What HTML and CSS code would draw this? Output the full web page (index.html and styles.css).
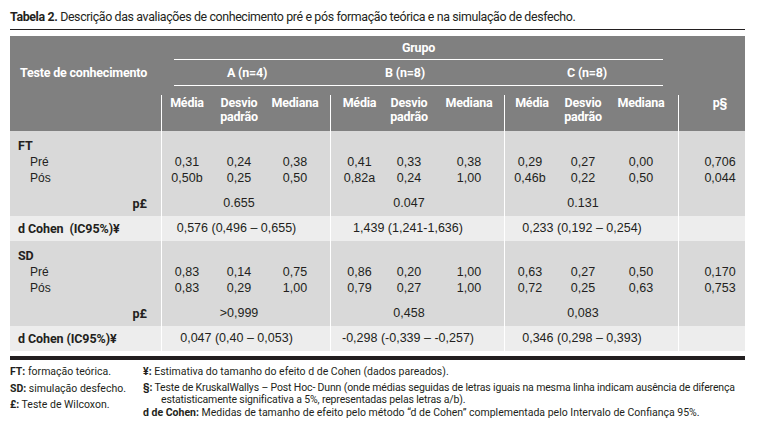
FILE: index.html
```html
<!DOCTYPE html>
<html lang="pt">
<head>
<meta charset="utf-8">
<link rel="stylesheet" href="styles.css">
</head>
<body>
<div class="page">
  <p class="caption"><b>Tabela 2.</b> Descrição das avaliações de conhecimento pré e pós formação teórica e na simulação de desfecho.</p>
  <table class="tbl">
    <colgroup>
      <col class="w-label">
      <col class="w-a1"><col class="w-a2"><col class="w-a3">
      <col class="w-b1"><col class="w-b2"><col class="w-b3">
      <col class="w-c1"><col class="w-c2"><col class="w-c3">
      <col class="w-p">
    </colgroup>
    <thead>
      <tr class="h1">
        <th rowspan="2" class="h-label">Teste de conhecimento</th>
        <th colspan="9" class="h-span"><div class="grupo-line">Grupo</div></th>
        <th rowspan="2"></th>
      </tr>
      <tr class="h2">
        <th colspan="9" class="h-span"><div class="groups-line"><span class="g-a">A (n=4)</span><span class="g-b">B (n=8)</span><span class="g-c">C (n=8)</span></div></th>
      </tr>
      <tr class="h3">
        <th></th>
        <th class="sep">Média</th><th>Desvio<br>padrão</th><th class="a3">Mediana</th>
        <th class="sep">Média</th><th class="b2">Desvio<br>padrão</th><th>Mediana</th>
        <th class="sep c1">Média</th><th>Desvio<br>padrão</th><th class="c3">Mediana</th>
        <th class="sep p">p§</th>
      </tr>
    </thead>
    <tbody class="sec">
      <tr class="r-head">
        <td class="label">FT</td>
        <td class="sep"></td><td></td><td></td>
        <td class="sep"></td><td></td><td></td>
        <td class="sep"></td><td></td><td></td>
        <td class="sep"></td>
      </tr>
      <tr class="r-pre">
        <td class="sub">Pré</td>
        <td class="sep">0,31</td><td>0,24</td><td class="a3">0,38</td>
        <td class="sep">0,41</td><td class="b2">0,33</td><td>0,38</td>
        <td class="sep">0,29</td><td>0,27</td><td class="c3">0,00</td>
        <td class="sep p">0,706</td>
      </tr>
      <tr class="r-pos">
        <td class="sub">Pós</td>
        <td class="sep">0,50b</td><td>0,25</td><td class="a3">0,50</td>
        <td class="sep">0,82a</td><td class="b2">0,24</td><td>1,00</td>
        <td class="sep">0,46b</td><td>0,22</td><td class="c3">0,50</td>
        <td class="sep p">0,044</td>
      </tr>
      <tr class="r-p">
        <td class="plabel">p£</td>
        <td class="sep"></td><td>0.655</td><td></td>
        <td class="sep"></td><td class="b2">0.047</td><td></td>
        <td class="sep"></td><td>0.131</td><td></td>
        <td class="sep"></td>
      </tr>
    </tbody>
    <tbody class="cohen">
      <tr>
        <td class="label">d Cohen&nbsp; (IC95%)¥</td>
        <td colspan="3" class="sep d">0,576 (0,496 – 0,655)</td>
        <td colspan="3" class="sep d">1,439 (1,241-1,636)</td>
        <td colspan="3" class="sep d">0,233 (0,192 – 0,254)</td>
        <td class="sep"></td>
      </tr>
    </tbody>
    <tbody class="sec">
      <tr class="r-head">
        <td class="label">SD</td>
        <td class="sep"></td><td></td><td></td>
        <td class="sep"></td><td></td><td></td>
        <td class="sep"></td><td></td><td></td>
        <td class="sep"></td>
      </tr>
      <tr class="r-pre">
        <td class="sub">Pré</td>
        <td class="sep">0,83</td><td>0,14</td><td class="a3">0,75</td>
        <td class="sep">0,86</td><td class="b2">0,20</td><td>1,00</td>
        <td class="sep">0,63</td><td>0,27</td><td class="c3">0,50</td>
        <td class="sep p">0,170</td>
      </tr>
      <tr class="r-pos">
        <td class="sub">Pós</td>
        <td class="sep">0,83</td><td>0,29</td><td class="a3">1,00</td>
        <td class="sep">0,79</td><td class="b2">0,27</td><td>1,00</td>
        <td class="sep">0,72</td><td>0,25</td><td class="c3">0,63</td>
        <td class="sep p">0,753</td>
      </tr>
      <tr class="r-p">
        <td class="plabel">p£</td>
        <td class="sep"></td><td>&gt;0,999</td><td></td>
        <td class="sep"></td><td class="b2">0,458</td><td></td>
        <td class="sep"></td><td>0,083</td><td></td>
        <td class="sep"></td>
      </tr>
    </tbody>
    <tbody class="cohen">
      <tr>
        <td class="label">d Cohen (IC95%)¥</td>
        <td colspan="3" class="sep d">0,047 (0,40 – 0,053)</td>
        <td colspan="3" class="sep d">-0,298 (-0,339 – -0,257)</td>
        <td colspan="3" class="sep d">0,346 (0,298 – 0,393)</td>
        <td class="sep"></td>
      </tr>
    </tbody>
  </table>
  <div class="rule"></div>
  <div class="notes">
    <div class="notes-left">
      <p><b>FT:</b> formação teórica.</p>
      <p><b>SD:</b> simulação desfecho.</p>
      <p><b>£:</b> Teste de Wilcoxon.</p>
    </div>
    <div class="notes-right">
      <p class="n-first"><b>¥:</b> Estimativa do tamanho do efeito d de Cohen (dados pareados).</p>
      <p class="hang"><b>§:</b> Teste de KruskalWallys – Post Hoc- Dunn (onde médias seguidas de letras iguais na mesma linha indicam ausência de diferença<br>estatisticamente significativa a 5%, representadas pelas letras a/b).</p>
      <p><b>d de Cohen:</b> Medidas de tamanho de efeito pelo método “d de Cohen” complementada pelo Intervalo de Confiança 95%.</p>
    </div>
  </div>
</div>
</body>
</html>
```

FILE: styles.css
```css
html, body {
  margin: 0;
  padding: 0;
  background: #ffffff;
}

.page {
  width: 735px;
  padding-left: 10px;
  color: #231f20;
  font-family: Roboto, "Liberation Sans", sans-serif;
}

.caption {
  margin: 0;
  padding: 9px 0 4px;
  font-size: 12.4px;
  letter-spacing: -0.37px;
  line-height: 16px;
  border-bottom: 1px solid #231f20;
  white-space: nowrap;
}

.tbl {
  margin-top: 6px;
  width: 735px;
  table-layout: fixed;
  border-collapse: collapse;
  border-spacing: 0;
}

.w-label { width: 151px; }
.w-a1 { width: 52px; }
.w-a2 { width: 52px; }
.w-a3 { width: 65px; }
.w-b1 { width: 59px; }
.w-b2 { width: 45px; }
.w-b3 { width: 70px; }
.w-c1 { width: 52px; }
.w-c2 { width: 54px; }
.w-c3 { width: 68px; }
.w-p { width: 67px; }

thead th {
  background: #808080;
  color: #ffffff;
  font-weight: bold;
  font-size: 12.5px;
  letter-spacing: -0.2px;
  padding: 0;
  vertical-align: top;
  text-align: center;
  white-space: nowrap;
}

thead .h-label {
  text-align: left;
  padding: 29px 0 0 10px;
  line-height: 15px;
}

.grupo-line {
  margin: 0 15px 0 13px;
  line-height: 23px;
  border-bottom: 1px solid #ffffff;
}

.h2 th {
  padding-bottom: 9px;
}

.groups-line {
  display: flex;
  margin: 0 15px 0 13px;
  line-height: 25px;
  border-bottom: 1px solid #ffffff;
}

.g-a { width: 146px; text-align: center; }
.g-b { width: 170px; text-align: center; }
.g-c { width: 152px; margin-left: 21px; text-align: center; }

.h3 th {
  line-height: 14px;
  padding: 1px 0 7px;
}

.h3 .c1 {
  padding-left: 4px;
}

.sep {
  box-shadow: inset 1px 0 0 #ffffff;
}

tbody td {
  padding: 0;
  font-family: "Liberation Sans", Arial, sans-serif;
  font-size: 12.5px;
  line-height: 15px;
  text-align: center;
  vertical-align: top;
  white-space: nowrap;
}

.h3 .a3, tbody .a3 { padding-right: 5px; }
.h3 .b2, tbody .b2 { padding-right: 5px; }
.h3 .c3, tbody .c3 { padding-right: 6px; }
.h3 .p, tbody .p { padding-left: 17px; }

.sec td {
  background: #d9d9d9;
}

.cohen td {
  background: #ededed;
  padding-top: 5px;
  padding-bottom: 5px;
}

tbody .label {
  text-align: left;
  padding-left: 8px;
  font-family: Roboto, "Liberation Sans", sans-serif;
  font-weight: bold;
  font-size: 12.5px;
  letter-spacing: -0.1px;
}

.r-head td {
  padding-top: 7px;
}

.r-pre td {
  padding-top: 2px;
}

.r-pos td {
  padding-top: 1px;
}

tbody .sub {
  text-align: left;
  padding-left: 20px;
  font-size: 12px;
}

.r-p td {
  padding-top: 9.5px;
  padding-bottom: 5.5px;
}

tbody .plabel {
  text-align: right;
  padding-right: 14px;
  font-family: Roboto, "Liberation Sans", sans-serif;
  font-weight: bold;
  font-size: 12.5px;
}

tbody .d {
  padding-right: 18px;
}

.rule {
  margin-top: 5px;
  height: 4px;
  background: #231f20;
}

.notes {
  display: flex;
  margin-top: 4px;
  font-size: 10.5px;
}

.notes p {
  margin: 0;
}

.notes-left {
  width: 133px;
  flex: none;
}

.notes-left p {
  line-height: 16.5px;
}

.notes-right {
  flex: 1;
  padding-top: 2px;
}

.notes-right p {
  line-height: 12.5px;
  white-space: nowrap;
}

.notes-right .n-first {
  margin-bottom: 3px;
}

.notes-right .hang {
  padding-left: 18px;
  text-indent: -18px;
  letter-spacing: -0.15px;
  margin-bottom: 0.5px;
}
```
